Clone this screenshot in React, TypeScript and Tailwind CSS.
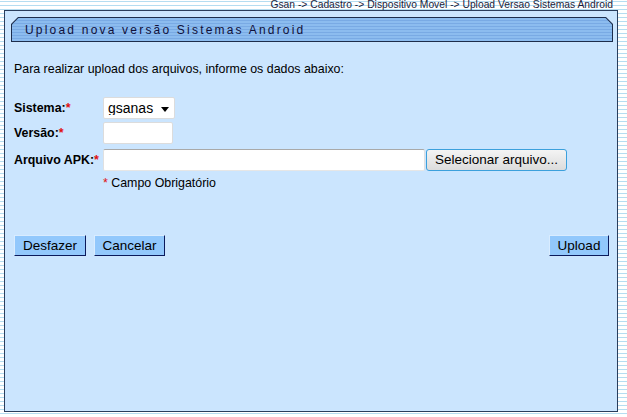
import { useState } from 'react';

/** Botão padrão do formulário (estilo GSAN) */
function FormButton({ label, width }: { label: string; width: string }) {
    return (
        <button
            type="button"
            className={`${width} h-[21px] bg-[#92c8fc] text-[13.5px] leading-none text-black border border-t-[#d9ecff] border-l-[#d9ecff] border-r-[#0b1a5c] border-b-[#0b1a5c]`}
        >
            {label}
        </button>
    );
}

function Req() {
    return <span className="text-[#e01010]">*</span>;
}

export default function App() {
    const [sistema, setSistema] = useState('gsanas');

    return (
        <div
            className="w-[627px] h-[417px] overflow-hidden bg-[repeating-linear-gradient(to_bottom,#ffffff_0px,#ffffff_1px,#b5ddf1_1px,#b5ddf1_2px,#ffffff_2px,#ffffff_4px)] font-['Liberation_Sans',Arial,sans-serif]"
        >
            {/* Breadcrumb */}
            <div className="h-[10px] pr-[14px] text-right text-[10.3px] leading-[10px] text-[#1c1c3a]">
                Gsan -&gt; Cadastro -&gt; Dispositivo Movel -&gt; Upload Versao Sistemas Android
            </div>

            {/* Painel principal */}
            <div className="ml-[4px] w-[614px] h-[402px] bg-[#cbe5fe] border border-[#2a3d5c] flex flex-col">
                {/* Barra de título */}
                <div className="mt-[6px] ml-[6px] w-[602px] h-[25px] p-[1px] bg-[#1d2d4c] [clip-path:polygon(7px_0,calc(100%-7px)_0,100%_7px,100%_100%,0_100%,0_7px)]">
                    <div className="h-full flex items-center pl-[13px] text-[12px] tracking-[2.2px] text-[#10103a] bg-[repeating-linear-gradient(to_bottom,#8cbcef_0px,#8cbcef_2px,#79aae4_2px,#79aae4_3px)] [clip-path:polygon(6.5px_0,calc(100%-6.5px)_0,100%_6.5px,100%_100%,0_100%,0_6.5px)]">
                        Upload nova versão Sistemas Android
                    </div>
                </div>

                {/* Conteúdo */}
                <div className="pl-[9px] pr-[8px] text-[12.4px] text-black">
                    <p className="mt-[20px] leading-[14px]">Para realizar upload dos arquivos, informe os dados abaixo:</p>

                    <div className="mt-[21px] flex flex-col">
                        <div className="flex items-center h-[22px]">
                            <label className="w-[89px] font-bold">Sistema:<Req /></label>
                            <div className="relative w-[72px] h-[22px] bg-white border border-[#dcdcdc] rounded-[2px]">
                                <select
                                    value={sistema}
                                    onChange={(e) => setSistema(e.target.value)}
                                    className="appearance-none w-full h-full pl-[4px] text-[14px] leading-none bg-transparent outline-none"
                                >
                                    <option value="gsanas">gsanas</option>
                                </select>
                                <span className="pointer-events-none absolute right-[5px] top-[9px] w-0 h-0 border-l-[4px] border-r-[4px] border-t-[5px] border-l-transparent border-r-transparent border-t-black" />
                            </div>
                        </div>

                        <div className="mt-[3px] flex items-center h-[22px]">
                            <label className="w-[89px] font-bold">Versão:<Req /></label>
                            <input className="w-[70px] h-[22px] bg-white border border-[#dcdcdc] rounded-[2px] outline-none" />
                        </div>

                        <div className="mt-[5px] flex items-center h-[22px]">
                            <label className="w-[89px] font-bold">Arquivo APK:<Req /></label>
                            <input className="w-[322px] h-[22px] bg-white border border-t-[#a9a9a9] border-x-[#e0e0e0] border-b-[#e6e6e6] rounded-[2px] outline-none" />
                            <button
                                type="button"
                                className="ml-[1px] w-[141px] h-[22px] rounded-[3px] border border-[#3ca0dc] bg-[linear-gradient(to_bottom,#f4f4f4,#dcdcdc)] text-[13.5px] leading-none text-black"
                            >
                                Selecionar arquivo...
                            </button>
                        </div>

                        <div className="mt-[5px] pl-[89px] leading-[14px]">
                            <Req /> Campo Obrigatório
                        </div>
                    </div>

                    {/* Ações */}
                    <div className="mt-[45px] flex items-center">
                        <div className="flex gap-[8px]">
                            <FormButton label="Desfazer" width="w-[72px]" />
                            <FormButton label="Cancelar" width="w-[71px]" />
                        </div>
                        <div className="ml-auto">
                            <FormButton label="Upload" width="w-[60px]" />
                        </div>
                    </div>
                </div>
            </div>
        </div>
    );
}
